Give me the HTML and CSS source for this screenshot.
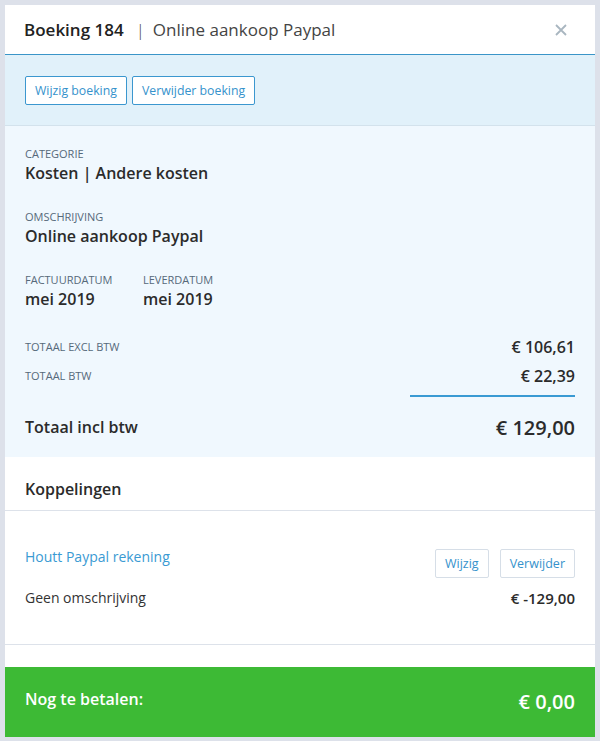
FILE: index.html
```html
<!DOCTYPE html>
<html>
<head>
<meta charset="utf-8">
<link rel="stylesheet" href="styles.css">
</head>
<body>
<div class="panel">
  <div class="header">
    <div class="title"><span class="title-main">Boeking 184</span><span class="title-sep">|</span><span class="title-sub">Online aankoop Paypal</span></div>
    <div class="close">
      <svg width="12" height="12" viewBox="0 0 12 12"><path d="M1 1L11 11M11 1L1 11" stroke="#a9b6c0" stroke-width="1.8" fill="none"/></svg>
    </div>
  </div>
  <div class="toolbar">
    <button class="btn btn-primary">Wijzig boeking</button>
    <button class="btn btn-primary">Verwijder boeking</button>
  </div>
  <div class="details">
    <div class="field">
      <div class="label">Categorie</div>
      <div class="value">Kosten | Andere kosten</div>
    </div>
    <div class="field">
      <div class="label">Omschrijving</div>
      <div class="value">Online aankoop Paypal</div>
    </div>
    <div class="field dates">
      <div class="date-col">
        <div class="label">Factuurdatum</div>
        <div class="value">mei 2019</div>
      </div>
      <div class="date-col">
        <div class="label">Leverdatum</div>
        <div class="value">mei 2019</div>
      </div>
    </div>
    <div class="totals">
      <div class="tot-row"><span class="label">Totaal excl btw</span><span class="amount">€ 106,61</span></div>
      <div class="tot-row"><span class="label">Totaal btw</span><span class="amount">€ 22,39</span></div>
      <div class="divider-wrap"><div class="divider"></div></div>
      <div class="grand-row"><span class="grand-label">Totaal incl btw</span><span class="grand-amount">€ 129,00</span></div>
    </div>
  </div>
  <div class="section-head">Koppelingen</div>
  <div class="link-block">
    <div class="link-row">
      <a class="link">Houtt Paypal rekening</a>
      <div class="link-actions">
        <button class="btn btn-light">Wijzig</button>
        <button class="btn btn-light">Verwijder</button>
      </div>
    </div>
    <div class="link-row2">
      <span class="desc">Geen omschrijving</span>
      <span class="link-amount">€ -129,00</span>
    </div>
  </div>
  <div class="spacer"></div>
  <div class="footer">
    <span class="footer-label">Nog te betalen:</span>
    <span class="footer-amount">€ 0,00</span>
  </div>
</div>
</body>
</html>
```

FILE: styles.css
```css
* { box-sizing: border-box; }
html, body { margin: 0; padding: 0; }
body {
  background: #dde1ea;
  font-family: "Open Sans", "Liberation Sans", sans-serif;
  color: #333;
  padding: 5px 5px 4px 5px;
}
.panel {
  width: 590px;
  background: #fff;
}
.header {
  height: 50px;
  border-bottom: 1px solid #3a95c8;
  display: flex;
  align-items: center;
  justify-content: space-between;
  padding: 0 28px 0 19px;
}
.title { font-size: 17px; line-height: 24px; white-space: nowrap; }
.title-main { font-weight: 600; color: #222; }
.title-sep { margin: 0 8px 0 12px; color: #444; font-weight: 300; }
.title-sub { color: #444; font-weight: 400; }
.close { width: 12px; height: 12px; display: flex; }
.toolbar {
  background: #e1f1fa;
  border-bottom: 1px solid #d3e2ec;
  padding: 21px 20px 20px;
  display: flex;
  gap: 5px;
}
.btn {
  font-family: "Open Sans", "Liberation Sans", sans-serif;
  font-size: 12.3px;
  height: 29px;
  line-height: 27px;
  padding: 0 9px;
  background: #fff;
  border-radius: 2px;
  color: #3592cc;
  cursor: pointer;
}
.btn-primary { border: 1px solid #3b97cf; }
.btn-light { border: 1px solid #d6dee7; font-size: 12.5px; padding: 0 9px; }
.details {
  background: #f0f8fe;
  padding: 20px 20px 15px;
}
.field + .field { margin-top: 25px; }
.label {
  font-size: 11px;
  line-height: 16px;
  text-transform: uppercase;
  color: #56697a;
}
.value {
  font-size: 16px;
  line-height: 22px;
  font-weight: 600;
  color: #2b2b2b;
}
.dates { display: flex; }
.date-col:first-child { width: 118px; }
.totals { margin-top: 22px; }
.tot-row {
  height: 29px;
  display: flex;
  justify-content: space-between;
  align-items: center;
}
.tot-row .label { font-size: 11px; }
.amount { font-size: 16px; font-weight: 600; color: #2b2b2b; }
.divider-wrap { display: flex; justify-content: flex-end; margin-top: 5px; }
.divider { width: 165px; height: 2px; background: #3a9ad3; }
.grand-row {
  margin-top: 15px;
  height: 30px;
  display: flex;
  justify-content: space-between;
  align-items: center;
}
.grand-label { font-size: 16px; font-weight: 600; color: #2b2b2b; }
.grand-amount { font-size: 20px; font-weight: 600; color: #2b2b2b; }
.section-head {
  padding: 21px 20px 10px;
  font-size: 16px;
  line-height: 22px;
  font-weight: 600;
  color: #2b2b2b;
  border-bottom: 1px solid #dde2ea;
}
.link-block {
  padding: 38px 20px 35px;
  border-bottom: 1px solid #dde2ea;
}
.link-row { display: flex; justify-content: space-between; align-items: flex-start; }
.link { color: #3a9ad3; font-size: 14px; line-height: 15px; }
.link-actions { display: flex; gap: 11px; }
.link-row2 {
  margin-top: 9px;
  display: flex;
  justify-content: space-between;
  line-height: 22px;
}
.desc { font-size: 14px; color: #333; }
.link-amount { font-size: 15px; font-weight: 600; color: #2b2b2b; }
.spacer { height: 22px; }
.footer {
  background: #3dba35;
  height: 70px;
  padding: 20px 20px 0;
  display: flex;
  justify-content: space-between;
  align-items: flex-start;
  color: #fff;
}
.footer-label { font-size: 16px; font-weight: 600; line-height: 22px; margin-top: 1px; }
.footer-amount { font-size: 20px; font-weight: 600; line-height: 30px; }
```
